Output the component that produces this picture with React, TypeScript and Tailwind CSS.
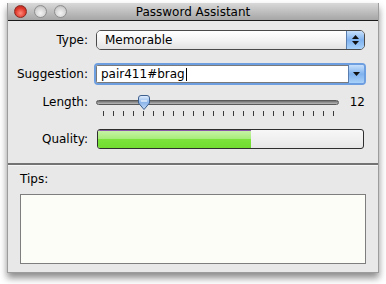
import React from "react"

const ticks = Array.from({ length: 24 }, (_, i) => i)

function Light({ red }: { red?: boolean }) {
  return (
    <div
      className={`w-[13px] h-[13px] rounded-full border ${
        red
          ? "border-[#8a2a22] bg-[radial-gradient(circle_at_50%_65%,#ff8a7a_0%,#e0392c_55%,#a5241a_100%)]"
          : "border-[#8e8e8e] bg-[radial-gradient(circle_at_50%_65%,#f4f4f4_0%,#d2d2d2_60%,#a8a8a8_100%)]"
      }`}
    />
  )
}

function Label({ children }: { children: React.ReactNode }) {
  return <div className="w-[80px] shrink-0 text-right text-[12px] text-black">{children}</div>
}

export default function App() {
  return (
    <div className="w-[386px] h-[284px] bg-white pt-[3px] pl-[7px] font-['DejaVu_Sans',sans-serif]">
      <div className="w-[372px] bg-[#e8e8e8] border-x border-b border-[#9c9c9c] shadow-[0_5px_7px_rgba(0,0,0,0.45)]">
        {/* title bar */}
        <div className="relative h-[18px] flex items-center bg-gradient-to-b from-[#d9d9d9] to-[#a6a6a6] border-b border-[#1a1a1a]">
          <div className="flex gap-[7px] pl-[6px]">
            <Light red />
            <Light />
            <Light />
          </div>
          <div className="absolute inset-0 flex items-center justify-center text-[12px] text-black">
            Password Assistant
          </div>
        </div>

        {/* form */}
        <div className="flex items-center mt-[9px]">
          <Label>Type:</Label>
          <div className="ml-[8px] mr-[13px] flex-1 h-[20px] flex rounded-[5px] border border-[#4a4a4a] overflow-hidden">
            <div className="flex-1 flex items-center pl-[8px] text-[12px] bg-gradient-to-b from-white via-[#f4f4f4] to-[#e2e2e2]">
              Memorable
            </div>
            <div className="w-[18px] flex flex-col items-center justify-center gap-[2px] border-l border-[#5a7db0] bg-gradient-to-b from-[#c8e0fb] via-[#7fb2ee] to-[#a9d1fa]">
              <svg width="7" height="4" viewBox="0 0 7 4"><path d="M3.5 0L7 4H0z" fill="#111" /></svg>
              <svg width="7" height="4" viewBox="0 0 7 4"><path d="M0 0h7L3.5 4z" fill="#111" /></svg>
            </div>
          </div>
        </div>

        <div className="flex items-center mt-[13px]">
          <Label>Suggestion:</Label>
          <div className="ml-[6px] mr-[12px] flex-1 h-[22px] flex rounded-[4px] border-2 border-[#6d9ee0] overflow-hidden">
            <div className="flex-1 flex items-center pl-[4px] text-[12px] bg-white border border-[#7a7a7a] border-r-0">
              pair411#brag
              <span className="w-px h-[13px] bg-black ml-px" />
            </div>
            <div className="w-[16px] flex items-center justify-center border-l border-[#5a7db0] bg-gradient-to-b from-[#c8e0fb] via-[#7fb2ee] to-[#a9d1fa]">
              <svg width="7" height="4" viewBox="0 0 7 4"><path d="M0 0h7L3.5 4z" fill="#111" /></svg>
            </div>
          </div>
        </div>

        <div className="flex items-center mt-[10px] h-[14px]">
          <Label>Length:</Label>
          <div className="ml-[8px] mr-[13px] flex-1 flex items-center">
            <div className="relative w-[243px] h-[5px] rounded-full bg-gradient-to-b from-[#6e6e6e] to-[#bdbdbd] border border-[#5a5a5a]">
              <svg className="absolute left-[40px] top-[-6px]" width="14" height="15" viewBox="0 0 14 15">
                <defs>
                  <linearGradient id="k" x1="0" y1="0" x2="0" y2="1">
                    <stop offset="0" stopColor="#e4efff" />
                    <stop offset="0.5" stopColor="#8cb6ea" />
                    <stop offset="1" stopColor="#c3dbf8" />
                  </linearGradient>
                </defs>
                <path d="M1.5 3Q1.5 0.5 4 0.5H10Q12.5 0.5 12.5 3V8L7 14.5L1.5 8Z" fill="url(#k)" stroke="#3f5f8e" />
                <path d="M4 6H10" stroke="#ffffff" strokeWidth="1" />
              </svg>
            </div>
            <div className="ml-auto text-[12px]">12</div>
          </div>
        </div>

        <div className="flex mt-[2px] pl-[95px] gap-[9px] h-[5px]">
          {ticks.map((t) => (
            <div key={t} className="w-px h-[5px] bg-[#3a3a3a]" />
          ))}
        </div>

        <div className="flex items-center mt-[13px]">
          <Label>Quality:</Label>
          <div className="ml-[9px] mr-[14px] flex-1 h-[20px] flex rounded-[3px] border border-[#2e2e2e] overflow-hidden bg-gradient-to-b from-[#f7f7f7] via-[#f0f0f0] to-[#e6e6e6]">
            <div className="w-[153px] h-full bg-[linear-gradient(to_bottom,#c6f3a4_0%,#a8ec7c_45%,#7be33a_50%,#72dc30_100%)] border-t border-[#8a5aa8]" />
          </div>
        </div>

        <div className="mt-[14px] h-[3px] border-t-2 border-[#737373] border-b border-b-[#f6f6f6]" />

        <div className="mt-[6px] pl-[12px] text-[12px] leading-[14px]">Tips:</div>
        <div className="mt-[8px] mx-[12px] mb-[8px] h-[70px] bg-[#fdfdf8] border border-[#7e7e7e]" />
      </div>
    </div>
  )
}
